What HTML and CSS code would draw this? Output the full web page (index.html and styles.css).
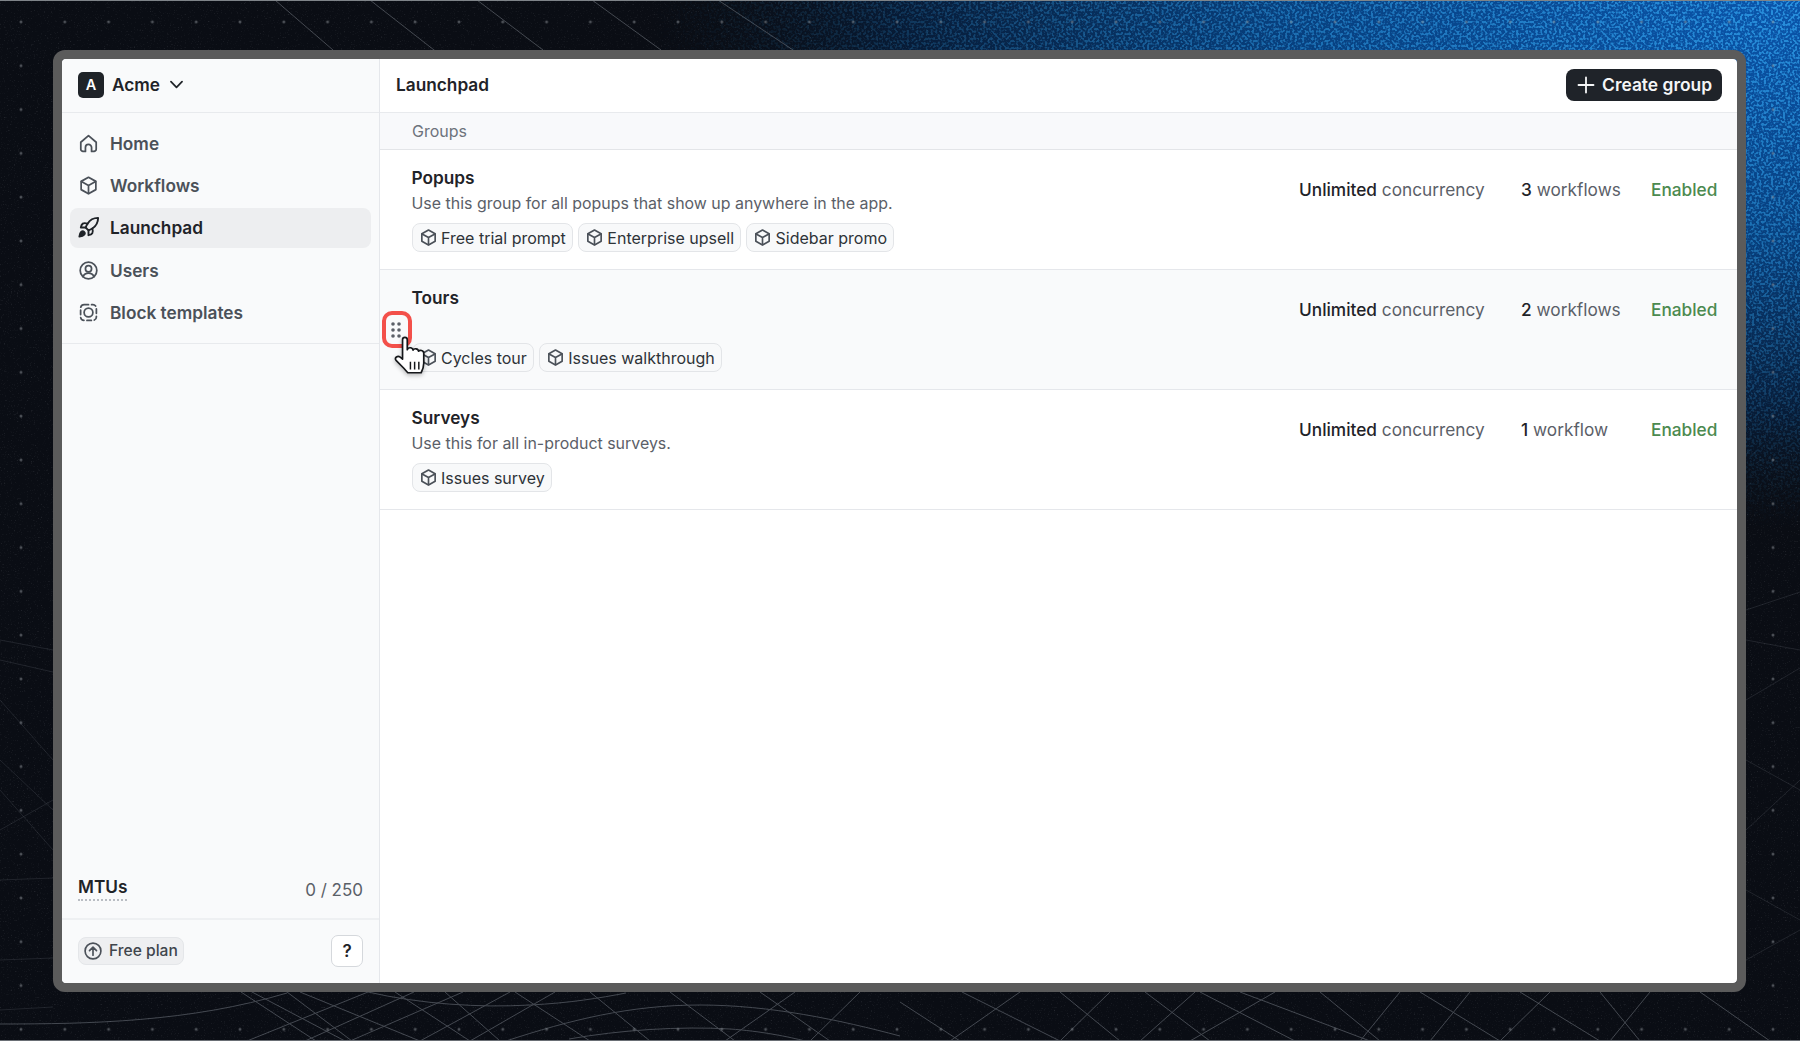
FILE: index.html
```html
<!DOCTYPE html>
<html>
<head>
<meta charset="utf-8">
<title>Launchpad</title>
<link rel="stylesheet" href="styles.css">
</head>
<body>
  <svg class="backdrop" width="1800" height="1041" viewBox="0 0 1800 1041">
    <defs>
      <radialGradient id="glow" gradientUnits="userSpaceOnUse" cx="1800" cy="0" r="1150" gradientTransform="translate(1800 0) scale(1 .46) translate(-1800 0)">
        <stop offset="0" stop-color="#0a56ad"/>
        <stop offset=".45" stop-color="#07407f"/>
        <stop offset=".78" stop-color="#071c38"/>
        <stop offset="1" stop-color="#0a0d14" stop-opacity="0"/>
      </radialGradient>
      <radialGradient id="speckleFade" gradientUnits="userSpaceOnUse" cx="1800" cy="0" r="1150" gradientTransform="translate(1800 0) scale(1 .46) translate(-1800 0)">
        <stop offset="0" stop-color="#aaa"/>
        <stop offset=".6" stop-color="#555"/>
        <stop offset="1" stop-color="#000"/>
      </radialGradient>
      <mask id="speckleMask"><rect width="1800" height="1041" fill="url(#speckleFade)"/></mask>
      <filter id="speckle" x="0" y="0" width="100%" height="100%">
        <feTurbulence type="fractalNoise" baseFrequency=".42" numOctaves="1" seed="11"/>
        <feGaussianBlur stdDeviation=".7"/>
        <feColorMatrix type="matrix" values="0 0 0 0 .04  0 0 0 0 .42  0 0 0 0 .92  0 0 0 7 -3.3"/>
      </filter>
      <filter id="grain" x="0" y="0" width="100%" height="100%">
        <feTurbulence type="fractalNoise" baseFrequency=".7" numOctaves="2" seed="3"/>
        <feColorMatrix type="matrix" values="0 0 0 0 .62  0 0 0 0 .64  0 0 0 0 .68  0 0 0 3 -1.85"/>
      </filter>
      <pattern id="dots" patternUnits="userSpaceOnUse" x="-.9" y="0" width="43.8" height="43.8">
        <circle cx="21.9" cy="21.9" r="1.5" fill="#8d9298"/>
      </pattern>
    </defs>
    <rect width="1800" height="1041" fill="#0a0d14"/>
    <rect width="1800" height="1041" fill="url(#glow)"/>
    <rect width="1800" height="1041" filter="url(#grain)" opacity=".14"/>
    <rect width="1800" height="1041" filter="url(#speckle)" mask="url(#speckleMask)"/>
    <rect width="1800" height="1041" fill="url(#dots)" opacity=".5"/>

    <g class="threads">
      <path d="M275 0 333 50M370 0 434 50M477 0 543 50M592 0 661 50M718 0 793 50"/>
      <path d="M0 1024C90 1024 190 1022 287 993"/>
      <path d="M368 992C420 1004 480 1008 530 1005 570 1003 600 998 626 993"/>
      <path d="M506 1041C570 1020 630 1005 700 1005 770 1005 840 1020 900 1036"/>
      <path d="M569 1039C620 1030 680 1026 730 1029 760 1031 790 1037 805 1041"/>
      <path d="M241 992 316 1041M252 992 345 1041M287 992 352 1041M300 992 420 1041M368 992 247 1041M414 992 305 1041M463 992 350 1041M510 992 420 1041M555 992 470 1041"/>
      <path d="M395 992 470 1041M445 992 500 1041M515 992 590 1041M590 992 650 1041M670 992 735 1041M760 992 830 1041M795 992 725 1041M860 992 810 1041"/>
      <path d="M900 1002 960 1041M962 992 1060 1041M1020 992 950 1041M1110 992 1060 1041M1060 992 1120 1041M1145 992 1210 1041M1200 992 1295 1041M1195 992 1140 1041M1275 992 1190 1041"/>
      <path d="M1240 992 1370 1041M1320 992 1380 1041M1400 992 1360 1041M1420 992 1500 1041M1470 992 1430 1041M1520 992 1600 1041M1550 992 1500 1041M1600 992 1640 1041M1650 992 1610 1041M1700 992 1770 1041"/>
    </g>
    <g class="threads threads-faint">
      <path d="M0 640 53 650M0 660 53 672M0 700 53 760M0 760 53 810M0 790 53 850M0 830 53 800M0 880 53 878M0 960 53 958M0 1010 53 1007"/>
      <path d="M1746 610 1800 592M1746 640 1800 650M1746 700 1800 668M1746 760 1800 790M1746 830 1800 780M1746 890 1800 920M1746 960 1800 930"/>
    </g>
    <rect width="1800" height="1" fill="#7f8489"/>
    <rect y="1040" width="1800" height="1" fill="#6a6f75"/>
  </svg>

  <svg class="icon-defs" width="0" height="0">
    <symbol id="cube" viewBox="0 0 24 24">
      <path d="M12 2.600 20.400 7.300V16.700L12 21.400 3.600 16.700V7.300z"/>
      <path d="M3.900 7.500 12 12 20.100 7.500M12 12V21"/>
    </symbol>
  </svg>

  <div class="frame">
    <div class="app">
      <aside class="sidebar">
        <div class="org">
          <span class="org-badge">A</span>
          <span class="org-name">Acme</span>
          <svg class="org-caret" viewBox="0 0 24 24"><path d="M5 8.500 12 15.500 19 8.500"/></svg>
        </div>
        <nav class="nav">
          <a class="nav-item">
            <svg class="nav-icon" viewBox="0 0 24 24"><path d="M3.200 10.600 12 3l8.800 7.600V18.500a2.500 2.500 0 0 1-2.500 2.500H15.500v-4.500a3.500 3.500 0 0 0-7 0V21H5.700a2.500 2.500 0 0 1-2.500-2.500z"/></svg>
            Home
          </a>
          <a class="nav-item">
            <svg class="nav-icon"><use href="#cube"/></svg>
            Workflows
          </a>
          <a class="nav-item active">
            <svg class="nav-icon rocket" viewBox="0 0 24 24">
              <path class="solid" d="M4.500 16.500c-1.500 1.260-2 5-2 5s3.740-.5 5-2c.71-.84.7-2.130-.09-2.910a2.180 2.180 0 0 0-2.910-.09z"/>
              <path d="m12 15-3-3a22 22 0 0 1 2-3.950A12.880 12.880 0 0 1 22 2c0 2.720-.78 7.500-6 11a22.350 22.350 0 0 1-4 2z"/>
              <path d="M9 12H4s.55-3.030 2-4c1.620-1.080 5 0 5 0M12 15v5s3.030-.55 4-2c1.080-1.620 0-5 0-5"/>
            </svg>
            Launchpad
          </a>
          <a class="nav-item">
            <svg class="nav-icon" viewBox="0 0 24 24">
              <circle cx="12" cy="12" r="9.500"/>
              <circle cx="12" cy="10" r="3.500"/>
              <path d="M5.600 19c1.300-2.700 3.600-4 6.400-4s5.100 1.300 6.400 4"/>
            </svg>
            Users
          </a>
          <a class="nav-item">
            <svg class="nav-icon" viewBox="0 0 24 24">
              <rect class="dashed" x="3" y="3" width="18" height="18" rx="4"/>
              <circle cx="12" cy="12" r="5"/>
            </svg>
            Block templates
          </a>
        </nav>
        <div class="sidebar-fill"></div>
        <div class="usage">
          <span class="usage-label">MTUs</span>
          <span class="usage-count">0 / 250</span>
        </div>
        <div class="plan">
          <span class="plan-pill">
            <svg class="plan-icon" viewBox="0 0 24 24"><circle cx="12" cy="12" r="9.500"/><path d="M12 17V7.500M7.800 11.500 12 7.300l4.200 4.200"/></svg>
            Free plan
          </span>
          <button class="help">?</button>
        </div>
      </aside>

      <main class="main">
        <header class="topbar">
          <h1 class="title">Launchpad</h1>
          <button class="create">
            <svg class="create-icon" viewBox="0 0 24 24"><path d="M12 3v18M3 12h18"/></svg>
            Create group
          </button>
        </header>
        <div class="section-head">Groups</div>

        <section class="group">
          <div class="group-body">
            <div class="group-name">Popups</div>
            <div class="group-desc">Use this group for all popups that show up anywhere in the app.</div>
            <div class="chips">
              <span class="chip"><svg class="chip-icon"><use href="#cube"/></svg>Free trial prompt</span>
              <span class="chip"><svg class="chip-icon"><use href="#cube"/></svg>Enterprise upsell</span>
              <span class="chip"><svg class="chip-icon"><use href="#cube"/></svg>Sidebar promo</span>
            </div>
          </div>
          <div class="stat stat-limit"><b>Unlimited</b> concurrency</div>
          <div class="stat stat-count"><b>3</b> workflows</div>
          <div class="stat stat-state">Enabled</div>
        </section>

        <section class="group hovered">
          <div class="group-body">
            <div class="group-name">Tours</div>
            <div class="group-desc">&nbsp;</div>
            <div class="chips">
              <span class="chip"><svg class="chip-icon"><use href="#cube"/></svg>Cycles tour</span>
              <span class="chip"><svg class="chip-icon"><use href="#cube"/></svg>Issues walkthrough</span>
            </div>
          </div>
          <div class="stat stat-limit"><b>Unlimited</b> concurrency</div>
          <div class="stat stat-count"><b>2</b> workflows</div>
          <div class="stat stat-state">Enabled</div>
          <div class="drag-handle">
            <svg class="drag-dots" viewBox="0 0 12 18">
              <circle cx="3" cy="3" r="1.800"/><circle cx="9" cy="3" r="1.800"/>
              <circle cx="3" cy="9" r="1.800"/><circle cx="9" cy="9" r="1.800"/>
              <circle cx="3" cy="15" r="1.800"/><circle cx="9" cy="15" r="1.800"/>
            </svg>
          </div>
          <svg class="cursor" viewBox="0 0 34 40">
            <path class="cursor-hand" d="M8 3.500c0-3 4.500-3 4.500 0V13c.8-2.500 5.200-2.500 5.500.5 .8-2 5-1.800 5.200 1 1-1.500 5-1 5 2V26c0 4-1 6-2.500 9H13l-4-4.500-7.200-7.300c-1.800-2.500 1.500-5 4-3L8 22z"/>
            <path class="cursor-bars" d="M15.500 24.500V32M19.500 24.500V32M23.500 24.500V32"/>
          </svg>
        </section>

        <section class="group">
          <div class="group-body">
            <div class="group-name">Surveys</div>
            <div class="group-desc">Use this for all in-product surveys.</div>
            <div class="chips">
              <span class="chip"><svg class="chip-icon"><use href="#cube"/></svg>Issues survey</span>
            </div>
          </div>
          <div class="stat stat-limit"><b>Unlimited</b> concurrency</div>
          <div class="stat stat-count"><b>1</b> workflow</div>
          <div class="stat stat-state">Enabled</div>
        </section>
      </main>
    </div>
  </div>
</body>
</html>
```

FILE: styles.css
```css
* {
  box-sizing: border-box;
}

html, body {
  margin: 0;
  height: 100%;
  overflow: hidden;
  background: #0a0d14;
}

body {
  font-family: Inter, "Liberation Sans", sans-serif;
  font-size: 16px;
  color: #1f2328;
  padding: 50px 54px 49px 53px;
}

.backdrop {
  position: absolute;
  top: 0;
  left: 0;
}

.icon-defs {
  position: absolute;
}

.threads {
  fill: none;
  stroke: #7d838c;
  stroke-width: 1;
  opacity: .5;
}

.threads-faint {
  opacity: .2;
}

#cube path {
  fill: none;
}

/* window */

.frame {
  position: relative;
  height: 942px;
  border: 9px solid #5b5b5b;
  border-radius: 12px;
}

.app {
  display: flex;
  height: 100%;
  background: #fff;
  border-radius: 4px;
  overflow: hidden;
}

/* sidebar */

.sidebar {
  flex: 0 0 318px;
  display: flex;
  flex-direction: column;
  background: #f9fafb;
  border-right: 1px solid #e5e7eb;
}

.org {
  display: flex;
  align-items: center;
  height: 54px;
  padding: 0 16px 2px;
  border-bottom: 1px solid #e8eaed;
}

.org-badge {
  display: flex;
  align-items: center;
  justify-content: center;
  width: 26px;
  height: 26px;
  border-radius: 5px;
  background: #1f2328;
  color: #fff;
  font-weight: 600;
  font-size: 14.5px;
}

.org-name {
  margin-left: 8px;
  font-weight: 600;
  font-size: 17.25px;
}

.org-caret {
  width: 19px;
  height: 19px;
  margin-left: 7px;
  fill: none;
  stroke: #1f2328;
  stroke-width: 2.2;
  stroke-linecap: round;
  stroke-linejoin: round;
}

.nav {
  display: flex;
  flex-direction: column;
  gap: 2.4px;
  padding: 10px 8px;
  border-bottom: 1px solid #e8eaed;
}

.nav-item {
  display: flex;
  align-items: center;
  gap: 11px;
  height: 40px;
  padding: 0 8px;
  border-radius: 8px;
  color: #4b5159;
  font-weight: 600;
  font-size: 17.25px;
}

.nav-item.active {
  background: #edeef0;
  color: #1f2328;
}

.nav-icon {
  flex: none;
  width: 21px;
  height: 21px;
  fill: none;
  stroke: currentColor;
  stroke-width: 2;
  stroke-linecap: round;
  stroke-linejoin: round;
}

.rocket {
  width: 23px;
  height: 23px;
  margin: 0 -1px;
}

.rocket .solid {
  fill: currentColor;
}

.dashed {
  stroke-dasharray: 5 3.5;
}

.sidebar-fill {
  flex: 1;
}

.usage {
  display: flex;
  justify-content: space-between;
  align-items: center;
  height: 56px;
  padding: 0 16px;
  border-bottom: 2px solid #eef0f2;
}

.usage-label {
  font-weight: 600;
  font-size: 17.25px;
  line-height: 20px;
  padding-bottom: 2px;
  border-bottom: 2px dotted #b9bdc3;
  margin-top: -4px;
}

.usage-count {
  color: #5b6068;
  font-size: 17px;
  margin-top: -2px;
}

.plan {
  display: flex;
  justify-content: space-between;
  align-items: center;
  height: 63px;
  padding: 0 16px 2px;
}

.plan-pill {
  display: flex;
  align-items: center;
  gap: 6px;
  height: 28px;
  padding: 0 5px 0 4px;
  background: #eeeff1;
  border: 1px solid #e4e6e9;
  border-radius: 8px;
  color: #3f454c;
  font-weight: 500;
  font-size: 15.6px;
}

.plan-icon {
  width: 20px;
  height: 20px;
  fill: none;
  stroke: #4b5159;
  stroke-width: 2;
  stroke-linecap: round;
  stroke-linejoin: round;
}

.help {
  width: 32px;
  height: 32px;
  padding: 0;
  background: #fff;
  border: 1px solid #d5d8dc;
  border-radius: 7px;
  color: #1f2328;
  font-family: inherit;
  font-weight: 600;
  font-size: 17px;
}

/* main */

.main {
  flex: 1;
  display: flex;
  flex-direction: column;
  min-width: 0;
}

.topbar {
  display: flex;
  justify-content: space-between;
  align-items: center;
  height: 54px;
  padding: 0 15px 2px 16px;
  border-bottom: 1px solid #e8eaed;
}

.title {
  margin: 0;
  font-weight: 600;
  font-size: 17.25px;
}

.create {
  display: flex;
  align-items: center;
  gap: 6px;
  height: 32px;
  padding: 0 10px;
  background: #1f2329;
  border: 0;
  border-radius: 8px;
  color: #f5f6f7;
  font-family: inherit;
  font-weight: 600;
  font-size: 17.4px;
}

.create-icon {
  width: 20px;
  height: 20px;
  fill: none;
  stroke: currentColor;
  stroke-width: 2.2;
  stroke-linecap: round;
}

.section-head {
  display: flex;
  align-items: center;
  height: 37px;
  padding-left: 32px;
  background: #f8f9fb;
  border-bottom: 1px solid #e3e5e8;
  color: #6d737b;
  font-size: 16px;
}

.group {
  position: relative;
  display: flex;
  height: 120px;
  padding: 15px 0 0 31.5px;
  border-bottom: 1px solid #e5e7eb;
}

.group.hovered {
  background: #f9fafb;
}

.group-body {
  flex: 1;
}

.group-name {
  font-weight: 600;
  font-size: 17.25px;
  line-height: 25px;
}

.group-desc {
  color: #5b6068;
  font-size: 15.95px;
  line-height: 25px;
  margin-top: 1px;
}

.chips {
  display: flex;
  gap: 5px;
  margin-top: 7px;
}

.chip {
  display: flex;
  align-items: center;
  gap: 3.5px;
  height: 29px;
  padding: 0 6px;
  background: #f8f9fa;
  border: 1px solid #e3e5e8;
  border-radius: 8px;
  color: #2e3338;
  font-size: 16px;
  white-space: nowrap;
}

.chip-icon {
  flex: none;
  width: 19px;
  height: 19px;
  fill: none;
  stroke: #4b5159;
  stroke-width: 2.1;
  stroke-linecap: round;
  stroke-linejoin: round;
}

.stat {
  flex: none;
  padding-top: 13px;
  font-size: 17.25px;
  line-height: 24px;
  color: #5b6068;
  white-space: nowrap;
}

.stat b {
  font-weight: 500;
  color: #1f2328;
}

.stat-limit {
  width: 222px;
}

.stat-count {
  width: 130px;
}

.stat-state {
  width: 86px;
  color: #4c8a50;
  font-weight: 500;
}

.drag-handle {
  position: absolute;
  top: 41px;
  left: 2px;
  display: flex;
  align-items: center;
  justify-content: center;
  width: 30px;
  height: 37px;
  padding-right: 2px;
  background: #f9fafb;
  border: 4px solid #f3504a;
  border-radius: 10px;
}

.drag-dots {
  width: 12px;
  height: 18px;
  fill: #5b6068;
}

.cursor {
  position: absolute;
  top: 66px;
  left: 13px;
  width: 38px;
  height: 42px;
  filter: drop-shadow(0 2px 2px rgba(0, 0, 0, .25));
}

.cursor-hand {
  fill: #fff;
  stroke: #15171a;
  stroke-width: 1.6;
  stroke-linejoin: round;
}

.cursor-bars {
  fill: none;
  stroke: #15171a;
  stroke-width: 1.4;
}
```
